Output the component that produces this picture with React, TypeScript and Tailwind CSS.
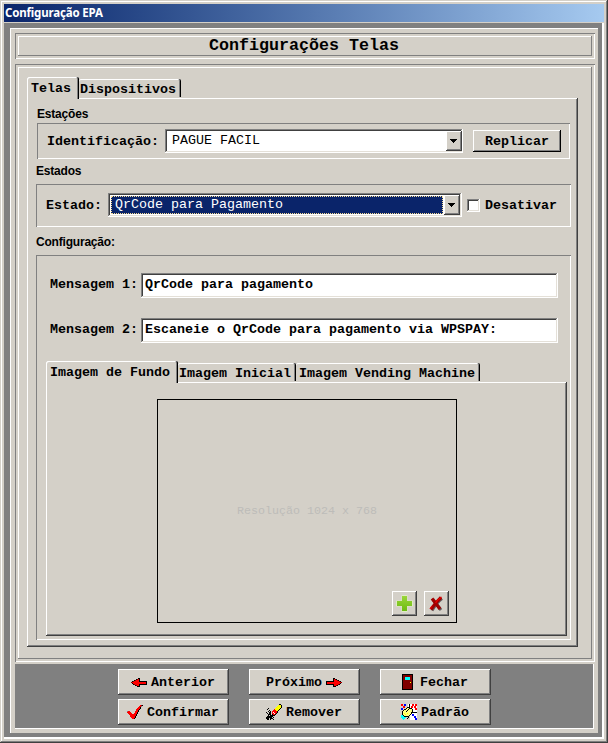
import React from "react";

const sunken = "shadow-[inset_1px_1px_0_#808080,inset_-1px_-1px_0_#fff]";
const raised = "shadow-[inset_-1px_-1px_0_#808080,inset_1px_1px_0_#fff]";
const field =
  "shadow-[inset_-1px_-1px_0_#fff,inset_1px_1px_0_#808080,inset_-2px_-2px_0_#e4e0d8,inset_2px_2px_0_#404040]";
const page =
  "shadow-[inset_-1px_-1px_0_#404040,inset_1px_1px_0_#fff,inset_-2px_-2px_0_#808080]";
const mono = "font-['Liberation_Mono',monospace] text-[13.33px] leading-[16px] whitespace-pre";
const caption =
  "font-['Liberation_Sans',sans-serif] text-[12px] leading-[14px] font-bold tracking-[-0.2px]";

type Palette = Record<string, string>;

const palette: Palette = {
  K: "#000000",
  R: "#ff0000",
  M: "#800000",
  C: "#00ffff",
  Y: "#ffff00",
  L: "#ffff80",
  B: "#0000ff",
  W: "#ffffff",
  G: "#808080",
};

function Pixels({ rows, className = "" }: { rows: string[]; className?: string }) {
  const w = rows[0].length;
  return (
    <svg width={w} height={rows.length} shapeRendering="crispEdges" className={`shrink-0 ${className}`}>
      {rows.flatMap((row, y) =>
        row.split("").map((c, x) =>
          palette[c] ? <rect key={`${x}-${y}`} x={x} y={y} width={1} height={1} fill={palette[c]} /> : null,
        ),
      )}
    </svg>
  );
}

const arrowLeft = [
  ".......KK.......",
  ".....KMRK.......",
  "...KMRRRK.......",
  ".KMRRRRRKKKKKKKK",
  "MRRRRRRRRRRRRRRK",
  ".KRRRRRRRRRRRRRK",
  "..KMRRRRKKKKKKKK",
  "....KMRRK.......",
  "......KKK.......",
];
const arrowRight = arrowLeft.map((r) => r.split("").reverse().join(""));

const check = [
  ".............RMK",
  "............RRG.",
  "...........RRK..",
  "..........RRRK..",
  ".........RRRK...",
  ".........RRK....",
  "GRR.....RRRK....",
  "RRRR....RRK.....",
  ".RRRR..RRRK.....",
  "..RRRRRRRK......",
  "...RRRRRRK......",
  "...RRRRRK.......",
  "....RRRRK.......",
  ".....RRK........",
];

const eraser = [
  ".............KK.",
  "............YYYK",
  "...........YYYYK",
  "..........YYYYYK",
  "..K......YYYYYK.",
  ".K......RYYYYK..",
  "...K...RRRYYK...",
  "..K.K.RRRRRK....",
  "K..KK.RWRRRK....",
  ".K.KK.RRWRK.....",
  "..KKK.KRRK......",
  "..K.KKKKK.......",
  ".KKKKKK.........",
  "KKKKKK.K........",
  "KKK.KKK.........",
  ".KK.K..K........",
];

const door = [
  "KKKKKKKKKKK",
  "KMMMMMMMMMK",
  "KMMMMMMMMMK",
  "KMMCCCCCMMK",
  "KMMCCCCCMMK",
  "KMMCCCCCMMK",
  "KMMMMMMMMMK",
  "KMMMMMMMMMK",
  "KMMMMMMMYMK",
  "KMMMMMMMMMK",
  "KMMMMMMMMMK",
  "KMMMMMMMMMK",
  "KMMMMMMMMMK",
  "KMMMMMMMMMK",
  "KMMMMMMMMMK",
  "KKKKKKKKKKK",
];

const paint = [
  "RR.BB..WKWWRRWRR",
  "RR.BB..WKWWRRWRR",
  "..RR...WKWRRWRRW",
  "..RR..KKKWRRWRRW",
  "BB...KLLKKKWWWRR",
  "BB.KKLLKLLLKWWRR",
  "..KLLLKLLLLKWWWW",
  ".KLLLKLLLLLKWWWW",
  ".KLLLLLLLLKKKKKK",
  ".KLYLLYLLLKWWWWW",
  ".KLLYLLLLKWBBWWW",
  "CCKLLLLLKWWBBWWW",
  "CCCKKKKK.WWWWBBW",
  "CCCCC..K.WWWWBBW",
  ".CCC..K..WWWWWBB",
  "..C......WWWWWBB",
];

const plus = (
  <svg width="17" height="17" viewBox="0 0 17 17">
    <defs>
      <linearGradient id="plusFill" x1="0" y1="0" x2="0" y2="1">
        <stop offset="0" stopColor="#9ad53a" />
        <stop offset="1" stopColor="#6dbb12" />
      </linearGradient>
    </defs>
    <path d="M5.500 0h6v5.500H17v6h-5.500V17h-6v-5.500H0v-6h5.500z" fill="#dfecc4" />
    <path d="M6 1h5v5h5v5h-5v5H6v-5H1V6h5z" fill="url(#plusFill)" />
  </svg>
);

const cross = (
  <svg width="15" height="16" viewBox="0 0 15 16">
    <path d="M4 3.500L12 14M13 2.500Q8 6 3 14.500" stroke="#606060" strokeWidth="3" fill="none" />
    <path d="M3 2.500L11 13M12 1.500Q7 6 2 13.500" stroke="#a00000" strokeWidth="3.200" fill="none" />
    <path d="M12.500 1Q8 4 6.500 7M1 13l2-3" stroke="#e80000" strokeWidth="1.200" fill="none" />
  </svg>
);

function Tab({ label, active, className }: { label: string; active?: boolean; className: string }) {
  return (
    <div
      className={`rounded-t-[2px] font-bold ${mono} ${
        active
          ? "relative z-10 -mb-px h-[22px] bg-[#d4d0c8] pt-[4px] pl-[4px] shadow-[inset_-1px_0_0_#000,inset_1px_1px_0_#fff,inset_-2px_0_0_#808080]"
          : "mt-[2px] h-[18px] pt-[3px] pl-px shadow-[inset_-1px_0_0_#000,inset_0_1px_0_#fff,inset_-2px_0_0_#808080]"
      } ${className}`}
    >
      {label}
    </div>
  );
}

function DropButton() {
  return (
    <div
      className={`flex h-[20px] w-[16px] items-center justify-center bg-[#d4d0c8] pr-px ${page}`}
    >
      <svg width="7" height="4" shapeRendering="crispEdges">
        <path d="M0 0h7v1H0zM1 1h5v1H1zM2 2h3v1H2zM3 3h1v1H3z" fill="#000" />
      </svg>
    </div>
  );
}

function Message({ label, value }: { label: string; value: string }) {
  return (
    <div className="flex h-[25px]">
      <span className={`w-[91px] pt-[4px] font-bold ${mono}`}>{label}</span>
      <div className={`h-[25px] w-[417px] bg-white pt-[4px] pl-[4px] font-bold ${mono} ${field}`}>{value}</div>
    </div>
  );
}

function FooterButton({ label, icon, after }: { label: string; icon: React.ReactNode; after?: boolean }) {
  return (
    <button
      className={`flex h-[26px] w-[111px] items-center justify-center gap-[4px] bg-[#d4d0c8] pr-px font-bold ${mono} ${page} ${
        after ? "flex-row-reverse" : ""
      }`}
    >
      {icon}
      <span className="pt-[2px]">{label}</span>
    </button>
  );
}

export default function App() {
  return (
    <div className="h-[743px] w-[608px] bg-[#d4d0c8] p-[4px] text-black shadow-[inset_-1px_-1px_0_#404040,inset_1px_1px_0_#d4d0c8,inset_-2px_-2px_0_#808080,inset_2px_2px_0_#fff]">
      <div className="h-[18px] bg-linear-to-r from-[#0a246a] to-[#a6caf0] pl-px font-['Noto_Sans',sans-serif] text-[11.5px] leading-[18px] font-bold tracking-[-0.17px] text-white">
        Configuração EPA
      </div>
      <div className="mt-px h-[716px] bg-[#808080] pt-[5px] pl-[6px] shadow-[inset_-2px_-2px_0_#fff]">
        <div className="h-[705px] w-[588px] bg-[#d4d0c8] pt-[5px] pl-[5px] shadow-[inset_1px_1px_0_#fff]">
          <div className={`h-[26px] w-[580px] p-[3px] ${sunken}`}>
            <h1
              className={`h-[20px] pr-[2px] text-center font-['Liberation_Mono',monospace] text-[16.67px] leading-[19px] font-bold ${raised}`}
            >
              Configurações Telas
            </h1>
          </div>

          <div className={`mt-[5px] h-[598px] w-[580px] p-[3px] ${sunken}`}>
            <div className={`h-[592px] pt-[10px] pl-[9px] ${raised}`}>
              <div className="flex h-[21px]">
                <Tab label="Telas" active className="w-[52px]" />
                <Tab label="Dispositivos" className="w-[102px]" />
              </div>

              <div className={`h-[549px] w-[551px] pl-[9px] ${page}`}>
                <div className={`h-[25px] pt-[9px] pl-px ${caption}`}>Estações</div>
                <div className={`ml-px flex h-[36px] w-[533px] pt-[6px] pl-[10px] ${sunken}`}>
                  <span className={`w-[118px] pt-[5px] font-bold ${mono}`}>Identificação:</span>
                  <div className={`flex h-[24px] w-[298px] justify-between bg-white p-[2px] pr-px ${field}`}>
                    <span className={`pt-[2px] pl-[5px] ${mono}`}>PAGUE FACIL</span>
                    <DropButton />
                  </div>
                  <button
                    className={`mt-px ml-[10px] h-[22px] w-[88px] pt-[2px] font-bold ${mono} shadow-[inset_-1px_-1px_0_#000,inset_1px_1px_0_#fff,inset_-2px_-2px_0_#808080]`}
                  >
                    Replicar
                  </button>
                </div>

                <div className={`h-[25px] pt-[5px] ${caption}`}>Estados</div>
                <div className={`flex h-[43px] w-[535px] pt-[9px] pl-[10px] ${sunken}`}>
                  <span className={`w-[62px] pt-[5px] font-bold ${mono}`}>Estado:</span>
                  <div className={`flex h-[24px] w-[354px] bg-white p-[2px] ${field}`}>
                    <div
                      className={`mt-px mr-px ml-px h-[18px] w-[332px] border border-dotted border-[#f5db95] bg-[#0a246a] pl-[3px] text-white ${mono}`}
                    >
                      QrCode para Pagamento
                    </div>
                    <DropButton />
                  </div>
                  <div className={`mt-[6px] ml-[5px] h-[13px] w-[13px] bg-white ${field}`} />
                  <span className={`pt-[5px] pl-[5px] font-bold ${mono}`}>Desativar</span>
                </div>

                <div className={`h-[28px] pt-[8px] ${caption}`}>Configuração:</div>
                <div className={`h-[385px] w-[535px] pt-[18px] ${sunken}`}>
                  <div className="flex flex-col gap-[20px] pl-[14px]">
                    <Message label="Mensagem 1:" value="QrCode para pagamento" />
                    <Message label="Mensagem 2:" value="Escaneie o QrCode para pagamento via WPSPAY:" />
                  </div>

                  <div className="mt-[18px] ml-[10px] flex h-[21px]">
                    <Tab label="Imagem de Fundo" active className="w-[132px]" />
                    <Tab label="Imagem Inicial" className="w-[118px]" />
                    <Tab label="Imagem Vending Machine" className="w-[184px] !pl-[3px]" />
                  </div>
                  <div className={`ml-[10px] h-[254px] w-[521px] pt-[17px] pl-[111px] ${page}`}>
                    <div className="flex h-[224px] w-[300px] flex-col border border-black">
                      <div className="pt-[103px] text-center font-['Liberation_Mono',monospace] text-[11.67px] leading-[16px] text-[#bdbcb9]">
                        Resolução 1024 x 768
                      </div>
                      <div className="mt-auto mb-[6px] flex justify-end gap-[7px] pr-[7px]">
                        <button className={`flex h-[25px] w-[25px] items-center justify-center ${page}`}>{plus}</button>
                        <button className={`flex h-[25px] w-[25px] items-center justify-center ${page}`}>{cross}</button>
                      </div>
                    </div>
                  </div>
                </div>
              </div>
            </div>
          </div>

          <div className="mt-[2px] grid h-[65px] w-[579px] grid-cols-[repeat(3,111px)] content-start gap-x-[20px] gap-y-[4px] bg-[#808080] pt-[5px] pl-[103px] shadow-[inset_-1px_-1px_0_#fff]">
            <FooterButton label="Anterior" icon={<Pixels rows={arrowLeft} />} />
            <FooterButton label="Próximo" icon={<Pixels rows={arrowRight} />} after />
            <FooterButton label="Fechar" icon={<Pixels rows={door} className="mr-[3px]" />} />
            <FooterButton label="Confirmar" icon={<Pixels rows={check} />} />
            <FooterButton label="Remover" icon={<Pixels rows={eraser} />} />
            <FooterButton label="Padrão" icon={<Pixels rows={paint} />} />
          </div>
        </div>
      </div>
    </div>
  );
}
